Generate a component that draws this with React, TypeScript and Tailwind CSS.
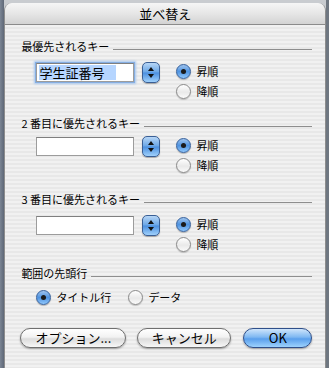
import React from "react";

const font = { fontFamily: '"Noto Sans CJK JP", "Noto Sans", sans-serif' };

function Radio({ on, label }: { on?: boolean; label: string }) {
  return (
    <div className="flex items-center h-[20px] gap-[5px]">
      {on ? (
        <div className="w-[15px] h-[15px] rounded-full border border-[#35609c] bg-[linear-gradient(180deg,#9fc4ee_0%,#4f93e0_50%,#8fc6fb_100%)] shadow-[0_1px_1px_rgba(0,0,0,0.25)] flex items-center justify-center">
          <div className="w-[5px] h-[5px] rounded-full bg-[#1b1b1b]" />
        </div>
      ) : (
        <div className="w-[15px] h-[15px] rounded-full border border-[#8a8a8a] bg-[linear-gradient(180deg,#ffffff_0%,#e9e9e9_55%,#fafafa_100%)] shadow-[0_1px_1px_rgba(0,0,0,0.2)]" />
      )}
      <span className="text-[11px] leading-[14px] text-black">{label}</span>
    </div>
  );
}

function Stepper() {
  return (
    <div className="w-[18px] h-[21px] rounded-[5px] border border-[#3a5f95] bg-[linear-gradient(180deg,#b7d6f6_0%,#6aa6e6_48%,#4b8fdf_52%,#9fd0fb_100%)] shadow-[0_1px_1px_rgba(0,0,0,0.3)] flex flex-col items-center justify-center gap-[3px]">
      <svg width="6" height="4" viewBox="0 0 6 4">
        <path d="M3 0 L6 4 L0 4 Z" fill="#111" />
      </svg>
      <svg width="6" height="4" viewBox="0 0 6 4">
        <path d="M0 0 L6 0 L3 4 Z" fill="#111" />
      </svg>
    </div>
  );
}

function KeyRow({ value, focused, top }: { value?: string; focused?: boolean; top: string }) {
  return (
    <div className={`flex items-start pl-[15px] ${top}`}>
      <div
        className={`mt-[2px] w-[98px] h-[19px] bg-white border border-[#9c9c9c] border-t-[#7f7f7f] flex items-center pl-[2px] ${
          focused ? "shadow-[0_0_0_1px_#86aee2,0_0_2px_2px_#a8c8ef]" : ""
        }`}
      >
        {value && (
          <span className="w-[77px] h-[15px] bg-[#b5d5ff] text-[13px] leading-[15px] text-black">{value}</span>
        )}
      </div>
      <div className="ml-[8px] mt-[1px]">
        <Stepper />
      </div>
      <div className="ml-[16px] flex flex-col">
        <Radio on label="昇順" />
        <Radio label="降順" />
      </div>
    </div>
  );
}

function Label({ text, top }: { text: string; top: string }) {
  return (
    <div className={`flex items-center h-[14px] ${top}`}>
      <span className="text-[11px] leading-[14px] text-black whitespace-nowrap">{text}</span>
      <div className="flex-1 h-px bg-[#8e8e8e] ml-[4px] self-end mb-[3px]" />
    </div>
  );
}

function Button({ children, w, primary }: { children: React.ReactNode; w: string; primary?: boolean }) {
  return (
    <div
      className={`${w} h-[20px] rounded-full flex items-center justify-center text-[13px] leading-[16px] text-black shadow-[0_1px_2px_rgba(0,0,0,0.35)] ${
        primary
          ? "border border-[#2f4f8a] bg-[linear-gradient(180deg,#cfe5fb_0%,#7fb8f2_45%,#5a9fec_55%,#9dd2fd_100%)]"
          : "border border-[#6f6f6f] bg-[linear-gradient(180deg,#ffffff_0%,#f2f2f2_45%,#dcdcdc_55%,#f7f7f7_100%)]"
      }`}
    >
      {children}
    </div>
  );
}

export default function App() {
  return (
    <div className="w-[329px] h-[368px] flex bg-[#6c7583] overflow-hidden" style={font}>
      <div className="w-[5px] bg-[linear-gradient(90deg,#7b8594,#5f6877)]" />
      <div className="flex-1 flex flex-col bg-[#c9ccd0]">
        <div className="h-[3px]" />
        <div className="flex-1 flex flex-col rounded-t-[8px] overflow-hidden border-x border-[#8d8d8d]">
          <div className="h-[22px] shrink-0 border-b border-[#8b8b8b] bg-[linear-gradient(180deg,#f6f6f6_0%,#e6e6e6_50%,#d3d3d3_100%)] flex items-center justify-center">
            <span className="text-[13px] leading-[16px] text-black">並べ替え</span>
          </div>
          <div className="flex-1 flex flex-col pl-[16px] pr-[13px] pt-[14px] bg-[repeating-linear-gradient(180deg,#f1f1f1_0px,#f1f1f1_2px,#e8e8e8_2px,#e8e8e8_4px)]">
            <Label text="最優先されるキー" top="" />
            <KeyRow value="学生証番号" focused top="mt-[8px]" />
            <Label text="2 番目に優先されるキー" top="mt-[15px]" />
            <KeyRow top="mt-[5px]" />
            <Label text="3 番目に優先されるキー" top="mt-[17px]" />
            <KeyRow top="mt-[8px]" />
            <Label text="範囲の先頭行" top="mt-[12px]" />
            <div className="flex items-center pl-[15px] mt-[7px] gap-[17px]">
              <Radio on label="タイトル行" />
              <Radio label="データ" />
            </div>
            <div className="flex items-center -ml-[1px] mt-[21px]">
              <Button w="w-[106px]">オプション...</Button>
              <div className="w-[11px]" />
              <Button w="w-[94px]">キャンセル</Button>
              <div className="w-[12px]" />
              <Button w="w-[69px]" primary>
                OK
              </Button>
            </div>
          </div>
        </div>
      </div>
      <div className="w-[3px] bg-[#6f7781]" />
    </div>
  );
}
